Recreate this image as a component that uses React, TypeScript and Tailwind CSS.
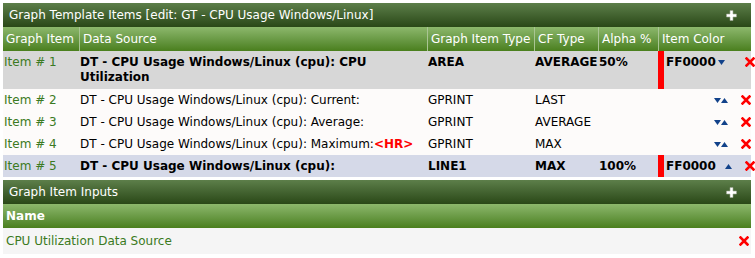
import React from 'react';

type Row = {
  id: number;
  source: React.ReactNode;
  type: string;
  cf: string;
  alpha: string;
  color?: string;
  bold?: boolean;
  bg: string;
  down?: boolean;
  up?: boolean;
};

const rows: Row[] = [
  { id: 1, source: 'DT - CPU Usage Windows/Linux (cpu): CPU Utilization', type: 'AREA', cf: 'AVERAGE', alpha: '50%', color: 'FF0000', bold: true, bg: 'bg-[#d7d7d7]', down: true },
  { id: 2, source: 'DT - CPU Usage Windows/Linux (cpu): Current:', type: 'GPRINT', cf: 'LAST', alpha: '', bg: 'bg-[#fdfbfa]', down: true, up: true },
  { id: 3, source: 'DT - CPU Usage Windows/Linux (cpu): Average:', type: 'GPRINT', cf: 'AVERAGE', alpha: '', bg: 'bg-[#fdfbfa]', down: true, up: true },
  {
    id: 4,
    source: (
      <>
        DT - CPU Usage Windows/Linux (cpu): Maximum:<span className="text-[#ff0000] font-bold">&lt;HR&gt;</span>
      </>
    ),
    type: 'GPRINT', cf: 'MAX', alpha: '', bg: 'bg-[#fdfbfa]', down: true, up: true,
  },
  { id: 5, source: 'DT - CPU Usage Windows/Linux (cpu):', type: 'LINE1', cf: 'MAX', alpha: '100%', color: 'FF0000', bold: true, bg: 'bg-[#d5d9e8]', up: true },
];

function Plus() {
  return (
    <svg width="11" height="11" viewBox="0 0 11 11">
      <path d="M4 0.5h3v3.5h3.5v3h-3.5v3.5h-3v-3.5h-3.5v-3h3.5z" fill="#ffffff" stroke="#9aa590" strokeWidth="0.6" />
    </svg>
  );
}

function Cross() {
  return (
    <svg width="10" height="10" viewBox="0 0 10 10">
      <path d="M1.5 1.5L8.5 8.5M8.5 1.5L1.5 8.5" stroke="#ff0000" strokeWidth="2.6" strokeLinecap="square" />
    </svg>
  );
}

function Down() {
  return (
    <svg width="7" height="5" viewBox="0 0 7 5">
      <path d="M0 0h7L3.5 5z" fill="#12428a" />
    </svg>
  );
}

function Up() {
  return (
    <svg width="7" height="5" viewBox="0 0 7 5">
      <path d="M0 5h7L3.5 0z" fill="#12428a" />
    </svg>
  );
}

function Header({ title }: { title: string }) {
  return (
    <div className="h-[24px] flex items-center justify-between pl-[6px] pr-[14px] bg-gradient-to-b from-[#5d7f4a] to-[#2a4817] text-white text-[12px]">
      <span>{title}</span>
      <Plus />
    </div>
  );
}

const cols = 'grid grid-cols-[76px_348px_107px_64px_60px_1fr]';

export default function App() {
  return (
    <div className="w-[755px] h-[258px] bg-white pt-[3px] pl-[3px]" style={{ fontFamily: '"DejaVu Sans", Verdana, sans-serif' }}>
      <div className="w-[748px]">
        <Header title="Graph Template Items [edit: GT - CPU Usage Windows/Linux]" />
        <div className={cn(cols, 'h-[24px] bg-gradient-to-b from-[#8db86c] to-[#4a7f1c] text-white text-[12px]')}>
          {['Graph Item', 'Data Source', 'Graph Item Type', 'CF Type', 'Alpha %', 'Item Color'].map((h, i) => (
            <div key={h} className={cn('flex items-center pl-[3px]', i > 0 && 'border-l border-[#a9c593]')}>
              {h}
            </div>
          ))}
        </div>
        {rows.map((r) => (
          <div key={r.id} className={cn(cols, r.bg, 'text-[12px] leading-[15px] text-black', r.id === 1 ? 'h-[38px]' : 'h-[22px]')}>
            <div className="pl-[1px] pt-[4px] text-[#3b7a22]">Item # {r.id}</div>
            <div className={cn('pl-[1px] pt-[4px]', r.bold && 'font-bold')}>{r.source}</div>
            <div className={cn('pl-[1px] pt-[4px]', r.bold && 'font-bold')}>{r.type}</div>
            <div className={cn('pl-[1px] pt-[4px] whitespace-nowrap', r.bold && 'font-bold')}>{r.cf}</div>
            <div className={cn('pl-[1px] pt-[4px]', r.bold && 'font-bold')}>{r.alpha}</div>
            <div className="flex items-stretch">
              {r.color ? <div className="w-[6px] bg-[#ff0000]" /> : <div className="w-[6px]" />}
              <div className="flex-1 pl-[2px] pt-[4px] font-bold">{r.color}</div>
              <div className="w-[16px] flex justify-end items-start pt-[9px]">
                <div className="w-[7px] flex">{r.down && <Down />}</div>
                <div className="w-[7px] flex">{r.up && <Up />}</div>
              </div>
              <div className="w-[23px] flex items-start justify-end pt-[6px]">
                <Cross />
              </div>
            </div>
          </div>
        ))}
        <div className="h-[3px]" />
        <Header title="Graph Item Inputs" />
        <div className="h-[24px] flex items-center pl-[3px] bg-gradient-to-b from-[#8db86c] to-[#4a7f1c] text-white text-[12px] font-bold">
          Name
        </div>
        <div className="h-[26px] flex items-center justify-between pl-[3px] pr-[2px] bg-[#f5f5f5] text-[12px] text-[#3b7a22]">
          <span>CPU Utilization Data Source</span>
          <Cross />
        </div>
      </div>
    </div>
  );
}

function cn(...c: (string | false | undefined)[]) {
  return c.filter(Boolean).join(' ');
}
